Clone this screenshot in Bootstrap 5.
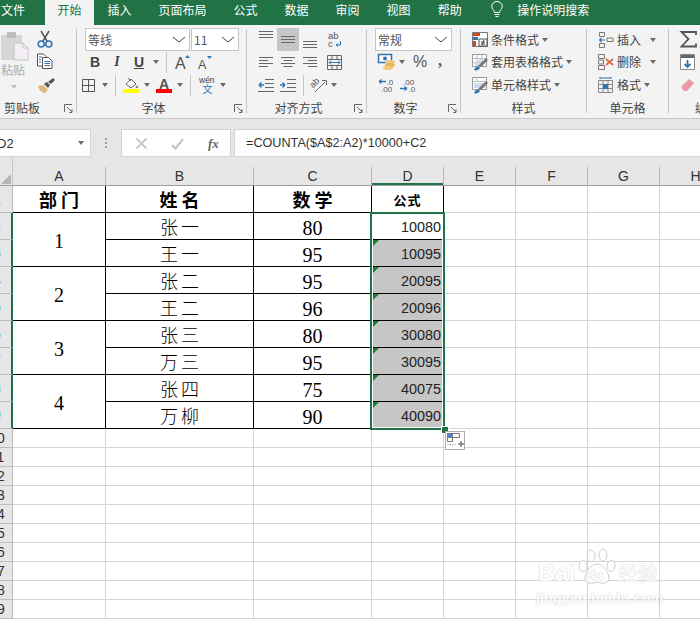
<!DOCTYPE html>
<html lang="zh-CN">
<head>
<meta charset="utf-8">
<title>Excel</title>
<link href="https://cdn.jsdelivr.net/npm/bootstrap@5.3.0/dist/css/bootstrap.min.css" rel="stylesheet">
<style>
html,body{margin:0;width:700px;height:622px;overflow:hidden;background:#fff}
body{font-family:"Liberation Sans","Noto Sans CJK SC",sans-serif;font-size:12px;color:#444;line-height:1}
svg{display:block;flex:none;overflow:visible}
svg text{font-family:"Liberation Sans","Noto Sans CJK SC",sans-serif}
.xl-app{width:700px;height:622px;overflow:hidden;position:relative}
.xl-tabs{height:25px;background:#217346;color:#fff;font-family:"Noto Sans CJK SC",sans-serif}
.xl-tab{padding:0 13.5px;height:25px;line-height:19px;flex:none}
.xl-tab.first{padding:0 20px 0 1px}
.xl-tab.on{padding:0 12.5px;background:#f3f3f3;color:#217346}
.xl-tab.tell{padding:0 0 0 14px}
.xl-bulb{margin-left:16px;margin-top:1px}
.xl-rbn{height:94px;background:#f3f3f3;border-bottom:1px solid #c8c8c8;font-family:"Noto Sans CJK SC",sans-serif;overflow:hidden}
.rsep{flex:none;width:1px;height:84px;margin-top:4px;background:#c6c6c6}
.rg{flex:none;position:relative;height:93px;padding-top:3px}
.rg-clip{width:76px}.rg-font{width:169px}.rg-align{width:119px}.rg-num{width:93px}.rg-style{width:125px}.rg-cell{width:81px}.rg-edit{width:31px}
.rrow{display:flex;align-items:center;height:23px}
.rrow:nth-child(2){height:22px}
.rrow.tall{height:24px}
.rlab{position:absolute;left:0;right:0;top:74px;height:17px;line-height:17px;text-align:center;color:#444;white-space:nowrap}
.rlab.lnch{padding-right:16px}
.rlab.s4{text-align:left;padding-left:4px}
.rlab.s26{text-align:left;padding-left:26px}
.lnch-ic{position:absolute;right:3px;top:79px}
.sel-box{height:23px;background:#fff;border:1px solid #c6c6c6;display:flex;align-items:center;justify-content:space-between;padding:0 3px 0 2px;color:#555;font-size:12px}
.w105{width:105px}.w48{width:48px}.w77{width:77px}
.crt{flex:none;width:0;height:0;border-left:3.5px solid transparent;border-right:3.5px solid transparent;border-top:4px solid #6a6a6a}
.vs{flex:none;width:1px;height:21px;background:#c6c6c6}
.bt{flex:none;width:22px;text-align:center;font-family:"Liberation Sans",sans-serif;font-size:14px;color:#444}
.bt.ser{font-family:"Liberation Serif",serif}
.bt u{text-underline-offset:1px}
.act{flex:none;width:22px;height:23px;background:#c6c6c6;display:flex;align-items:center;justify-content:center}
.pct{flex:none;width:13px;font-family:"Liberation Sans",sans-serif;font-size:16px;color:#555;text-align:center}
.cma{flex:none;font-family:"Liberation Serif",serif;font-weight:700;font-size:16px;color:#555;width:6px;margin-top:-3px}
.pst-txt{color:#a8a8a8;font-size:12px;text-align:center;width:26px;margin-top:4px}
.pst-col{width:36px;flex:none;padding-top:2px}
.pst-crt{margin:9px 0 0 11px;border-top-color:#bdbdbd}
.stk{display:flex;flex-direction:column;flex:none;padding-top:3px}
.t5{margin-top:5px}.t9{margin-top:9px}
.l1{margin-left:1px}.l3{margin-left:3px}.l4{margin-left:4px}.l5{margin-left:5px}.l6{margin-left:6px}.l7{margin-left:7px}.l8{margin-left:8px}.l9{margin-left:9px}.l10{margin-left:10px}.l11{margin-left:11px}.l12{margin-left:12px}.l13{margin-left:13px}.l23{margin-left:23px}
.xl-fbar{height:38px;background:#e6e6e6;padding-top:10px;margin:0}
.fb-name{flex:none;width:91px;height:28px;background:#fff;border:1px solid #d4d4d4;border-left:0;display:flex;align-items:center;justify-content:space-between;padding:0 6px 0 0;font-size:13px;color:#333;overflow:hidden}
.fb-name span{margin-left:-3px}
.fb-dots{flex:none;width:30px;display:flex;flex-direction:column;align-items:center;justify-content:center;gap:2px}
.fb-dots i{display:block;width:2px;height:2px;background:#a0a0a0}
.fb-fx{flex:none;width:110px;height:28px;background:#fff;border:1px solid #d4d4d4;display:flex;align-items:center}
.fx-t{font-family:"Liberation Serif",serif;font-style:italic;font-weight:700;font-size:13px;color:#666;margin-left:24px}
.fb-in{flex:1 1 auto;margin-left:3px;height:28px;background:#fff;border:1px solid #d4d4d4;border-right:0;display:flex;align-items:center;padding-left:11px;font-size:12.65px;color:#333;white-space:nowrap}
.xl-sheet{display:grid;grid-template-columns:13px 93px 148px 118px 72px 72px 72px 72px 72px;grid-template-rows:29px repeat(9,27px) repeat(10,19px);width:732px;background:#fff}
.xl-corner,.xl-ch{background:#e6e6e6;border-bottom:1px solid #9f9f9f}
.xl-corner{border-right:1px solid #c6c6c6;position:relative;overflow:hidden}
.xl-corner::after{content:"";position:absolute;right:1px;bottom:1px;border-style:solid;border-width:0 0 10px 10px;border-color:transparent transparent #b5b5b5 transparent}
.xl-ch{position:relative;display:flex;align-items:flex-end;justify-content:center;font-size:14px;color:#333;padding-bottom:1px;line-height:16px;border-right:1px solid #b9b9b9}
.xl-ch::before{content:"";position:absolute;left:0;right:-1px;top:0;height:10px;background:#e6e6e6}
.xl-ch.on{box-shadow:inset 0 -2px 0 #217346}
.xl-rh{background:#e6e6e6;border-bottom:1px solid #bdbdbd;border-right:1px solid #b9b9b9;overflow:hidden;display:flex;align-items:center;font-size:14px;color:#333}
.xl-rh span{flex:none;width:18px;margin-left:-12px;text-align:center}
.xl-rh.on{border-right:2px solid #217346;color:#217346}
.xl-c{border-right:1px solid #d4d4d4;border-bottom:1px solid #d4d4d4}
.xl-t{border-right:1px solid #000;border-bottom:1px solid #000;display:flex;align-items:center;justify-content:center;color:#000;position:relative;font-family:"Liberation Serif","Noto Sans CJK SC",serif}
.xl-h{font-family:"Noto Sans CJK SC",sans-serif;font-weight:700;font-size:18px;letter-spacing:4px;padding-left:4px}
.xl-h.sm{font-size:13px;letter-spacing:1px;padding-left:0}
.xl-n{font-family:"Noto Sans CJK SC",sans-serif;font-weight:300;font-size:18px;letter-spacing:3px;padding-left:3px}
.xl-d{font-size:20px;padding-top:4px}
.xl-m{grid-row:span 2;padding-top:2px}
.xl-v{font-family:"Liberation Sans",sans-serif;font-size:14.4px;justify-content:flex-end;padding-right:2px;padding-top:3px;color:#222;line-height:1}
.xl-v.gy{background:#c6c6c6}
.xl-v.gy::before{content:"";position:absolute;left:1px;top:0;border-style:solid;border-width:6px 6px 0 0;border-color:#1f7a37 transparent transparent transparent}
.xl-sel{position:absolute;left:370px;top:212px;width:75px;height:218px;border:2px solid #217346;box-shadow:inset 0 0 0 1px #fff;pointer-events:none}
.xl-hnd{position:absolute;left:441px;top:426px;width:6px;height:6px;background:#217346;border:1px solid #fff;box-sizing:content-box}
.xl-paste{position:absolute;left:445px;top:431px;width:20px;height:19px;background:#fff;border:1px solid #adadad;display:flex;align-items:center;justify-content:center}
.wm{position:absolute;left:534px;top:546px;width:130px;height:62px;color:#fff;font-family:"Liberation Sans","Noto Sans CJK SC",sans-serif;text-shadow:0 0 1px #c4c4c4,0 0 1px #c4c4c4;opacity:.8}
.wm-t{position:absolute;left:4px;top:15px;font-size:24px;font-weight:700;white-space:nowrap}
.wm-du{position:absolute;left:53px;top:22px;font-size:13px;font-weight:700;white-space:nowrap}
.wm-j{position:absolute;left:84px;top:17px;font-size:20px;font-family:"Noto Sans CJK SC",sans-serif;white-space:nowrap}
.wm-u{position:absolute;left:2px;top:45px;font-size:14.5px;white-space:nowrap;font-weight:700}
.wm-p{position:absolute;left:44px;top:0}
</style>
</head>
<body>
<div class="xl-app">
  <div class="xl-tabs d-flex">
    <div class="xl-tab first">文件</div>
    <div class="xl-tab on">开始</div>
    <div class="xl-tab">插入</div>
    <div class="xl-tab">页面布局</div>
    <div class="xl-tab">公式</div>
    <div class="xl-tab">数据</div>
    <div class="xl-tab">审阅</div>
    <div class="xl-tab">视图</div>
    <div class="xl-tab">帮助</div>
    <svg class="xl-bulb" width="12" height="17" viewBox="0 0 12 17" fill="none" stroke="#fff" stroke-width="1"><path d="M3.5 11.5C3.5 9 .7 8 .7 5.5a5.3 5 0 0 1 10.6 0c0 2.5-2.8 3.5-2.8 6zM3.5 13.5h5M4.5 15.5h3"/></svg>
    <div class="xl-tab tell">操作说明搜索</div>
  </div>

  <div class="xl-rbn d-flex">
    <!-- clipboard -->
    <div class="rg rg-clip d-flex">
      <div class="pst-col">
        <svg class="l1" width="28" height="30" viewBox="0 0 28 30"><rect x="0" y="5" width="21" height="25" rx="1" fill="#d6d6d6"/><rect x="6" y="2" width="9" height="6" rx="1" fill="#bdbdbd"/><path d="M13 13h9l5 5v12H13z" fill="#f3eef3" stroke="#c4c4c4"/><path d="M22 13v5h5" fill="none" stroke="#c4c4c4"/></svg>
        <div class="pst-txt">粘贴</div>
        <div class="crt pst-crt"></div>
      </div>
      <div class="stk">
        <svg class="l1" width="16" height="17" viewBox="0 0 16 17" fill="none"><path d="M4 0l6 10M12 0L6 10" stroke="#555" stroke-width="1.5"/><circle cx="4.2" cy="13" r="3" stroke="#2f75b5" stroke-width="1.6"/><circle cx="11.8" cy="13" r="3" stroke="#2f75b5" stroke-width="1.6"/></svg>
        <svg class="l1 t5" width="16" height="16" viewBox="0 0 16 16" fill="#fff" stroke="#555"><path d="M.5 1h6l3 3v9h-9z"/><path d="M5.5 4.500h6l3.500 3.500v7.500h-9.500z"/><path d="M2 4h3M2 6.500h2M2 9h2" stroke="#2f75b5"/><path d="M7.500 8.500h5.500M7.500 10.500h5.500M7.500 12.500h5.500" stroke="#2f75b5"/></svg>
        <svg class="l1 t9" width="18" height="15" viewBox="0 0 18 15"><path d="M1 8l5-1 5 5-3 3c-3 0-6-3-7-7z" fill="#e2b77b"/><path d="M7 6l3-2 3 3-2 3zM11 4l5-4 2 2-4 4z" fill="#555"/></svg>
      </div>
      <div class="rlab s4">剪贴板</div>
      <svg class="lnch-ic" width="9" height="9" viewBox="0 0 9 9" fill="none" stroke="#666"><path d="M.5 8V.5H8"/><path d="M3 3l5 5M8 5v3.500H5"/></svg>
    </div>
    <div class="rsep"></div>

    <!-- font -->
    <div class="rg rg-font">
      <div class="rrow ps-2">
        <div class="sel-box w105"><span>等线</span><svg width="14" height="7" viewBox="0 0 14 7" fill="none" stroke="#444"><path d="M1 1l6 5 6-5"/></svg></div>
        <div class="sel-box w48 l1"><span>11</span><svg width="14" height="7" viewBox="0 0 14 7" fill="none" stroke="#444"><path d="M1 1l6 5 6-5"/></svg></div>
      </div>
      <div class="rrow">
        <div class="bt l7 fw-bold">B</div>
        <div class="bt ser fst-italic fw-bold">I</div>
        <div class="bt fw-bold"><u>U</u></div>
        <div class="crt l3"></div>
        <div class="vs l7"></div>
        <svg class="l8" width="16" height="16" viewBox="0 0 16 16"><text x="0" y="15" font-size="16" fill="#555">A</text><path d="M10 4l2.500-3L15 4z" fill="#2f75b5"/></svg>
        <svg class="l7" width="16" height="15" viewBox="0 0 16 15"><text x="0" y="14" font-size="12.500" fill="#555">A</text><path d="M9 1l2.500 3L14 1z" fill="#2f75b5"/></svg>
      </div>
      <div class="rrow tall">
        <svg class="l5" width="13" height="13" viewBox="0 0 13 13" fill="none" stroke="#555"><path d="M.5.5h12v12H.5zM6.500.5v12M.5 6.500h12"/></svg>
        <div class="crt l7"></div>
        <div class="vs l7"></div>
        <svg class="l7" width="16" height="16" viewBox="0 0 16 16"><path d="M3 7l5-5 5 5-5 4z" fill="#fff" stroke="#666"/><path d="M5 1l3 3" stroke="#666"/><path d="M14 8l1.500 3h-3z" fill="#777"/><rect y="12" width="16" height="4" fill="#ffff00"/></svg>
        <div class="crt l5"></div>
        <svg class="l6" width="16" height="16" viewBox="0 0 16 16"><text x="3" y="11.500" font-size="14" font-weight="700" fill="#555">A</text><rect y="12" width="16" height="4" fill="#ff0000"/></svg>
        <div class="crt l5"></div>
        <div class="vs l7"></div>
        <svg class="l8" width="17" height="18" viewBox="0 0 17 18"><text x="0" y="7" font-size="8.500" fill="#444">wén</text><text x="3.500" y="17" font-size="10" fill="#2f75b5">文</text></svg>
        <div class="crt l4"></div>
      </div>
      <div class="rlab lnch">字体</div>
      <svg class="lnch-ic" width="9" height="9" viewBox="0 0 9 9" fill="none" stroke="#666"><path d="M.5 8V.5H8"/><path d="M3 3l5 5M8 5v3.500H5"/></svg>
    </div>
    <div class="rsep"></div>

    <!-- alignment -->
    <div class="rg rg-align">
      <div class="rrow">
        <svg class="l12" width="14" height="23" viewBox="0 0 14 23" stroke="#666"><path d="M0 3.500h14M0 6.500h14M0 9.500h14" /></svg>
        <div class="act l4"><svg width="14" height="9" viewBox="0 0 14 9" stroke="#666"><path d="M0 1.500h14M0 4.500h14M0 7.500h14"/></svg></div>
        <svg class="l4" width="14" height="23" viewBox="0 0 14 23" stroke="#666"><path d="M0 13.500h14M0 16.500h14M0 19.500h14"/></svg>
        <svg class="l11" width="14" height="17" viewBox="0 0 14 17"><text x="0" y="7.500" font-size="9.500" fill="#555">ab</text><text x="0" y="16" font-size="9.500" fill="#555">c</text><path d="M12.500 10v4H8M8 14l2-1.500M8 14l2 1.500" fill="none" stroke="#2f75b5"/></svg>
      </div>
      <div class="rrow">
        <svg class="l12" width="14" height="10" viewBox="0 0 14 10" stroke="#666"><path d="M0 .5h14M0 3.500h9M0 6.500h14M0 9.500h9"/></svg>
        <svg class="l8" width="14" height="10" viewBox="0 0 14 10" stroke="#666"><path d="M0 .5h14M2.500 3.500h9M0 6.500h14M2.500 9.500h9"/></svg>
        <svg class="l8" width="14" height="10" viewBox="0 0 14 10" stroke="#666"><path d="M0 .5h14M5 3.500h9M0 6.500h14M5 9.500h9"/></svg>
        <svg class="l10" width="15" height="15" viewBox="0 0 15 15" fill="none"><path d="M.5.500h14v14H.5zM.5 4.500h14M.5 10.500h14M5 .5v4M10 .5v4M5 10.500v4M10 10.500v4" stroke="#666"/><path d="M2 7.500h11M2 7.500l2-2M2 7.500l2 2M13 7.500l-2-2M13 7.500l-2 2" stroke="#2f75b5"/></svg>
      </div>
      <div class="rrow tall">
        <svg class="l11" width="16" height="13" viewBox="0 0 16 13" fill="none"><path d="M7 .5h9M7 4.500h9M7 8.500h9M0 12.500h16" stroke="#666"/><path d="M6 6H1M1 6l2.500-2.500M1 6l2.500 2.500" stroke="#2f75b5" stroke-width="1.400"/></svg>
        <svg class="l6" width="16" height="13" viewBox="0 0 16 13" fill="none"><path d="M7 .5h9M7 4.500h9M7 8.500h9M0 12.500h16" stroke="#666"/><path d="M0 6h5M5 6L2.500 3.500M5 6L2.500 8.500" stroke="#2f75b5" stroke-width="1.400"/></svg>
        <div class="vs l7"></div>
        <svg class="l7" width="17" height="16" viewBox="0 0 17 16"><text x="0" y="9" font-size="9" fill="#555" transform="rotate(-45 4 8)">ab</text><path d="M4 15L14 5M11 3.500h4.500V8" fill="none" stroke="#666"/></svg>
        <div class="crt l3"></div>
      </div>
      <div class="rlab lnch">对齐方式</div>
      <svg class="lnch-ic" width="9" height="9" viewBox="0 0 9 9" fill="none" stroke="#666"><path d="M.5 8V.5H8"/><path d="M3 3l5 5M8 5v3.500H5"/></svg>
    </div>
    <div class="rsep"></div>

    <!-- number -->
    <div class="rg rg-num">
      <div class="rrow ps-2">
        <div class="sel-box w77"><span>常规</span><svg width="14" height="7" viewBox="0 0 14 7" fill="none" stroke="#444"><path d="M1 1l6 5 6-5"/></svg></div>
      </div>
      <div class="rrow">
        <svg class="l11" width="18" height="16" viewBox="0 0 18 16"><rect x=".5" y=".5" width="13" height="8" fill="#fff" stroke="#2f75b5" stroke-width="1.500"/><circle cx="7" cy="4.500" r="2" fill="#2f75b5"/><ellipse cx="12" cy="8" rx="5" ry="2" fill="#f4c77f"/><ellipse cx="12" cy="11" rx="5" ry="2" fill="#eab35f"/><ellipse cx="10" cy="14" rx="5" ry="2" fill="#f4c77f"/></svg>
        <div class="crt l3"></div>
        <div class="pct l8">%</div>
        <div class="cma l12">,</div>
      </div>
      <div class="rrow tall">
        <svg class="l11" width="15" height="14" viewBox="0 0 15 14"><path d="M8 3.500H1M1 3.500l2.500-2M1 3.500l2.500 2" fill="none" stroke="#2f75b5" stroke-width="1.300"/><text x="8.500" y="6.500" font-size="8" fill="#555">.0</text><text x="3" y="14" font-size="8" fill="#555">.00</text></svg>
        <svg class="l7" width="15" height="14" viewBox="0 0 15 14"><text x="3" y="6.500" font-size="8" fill="#555">.00</text><path d="M0 10.500h7M7 10.500l-2.500-2M7 10.500l-2.500 2" fill="none" stroke="#2f75b5" stroke-width="1.300"/><text x="8.500" y="14" font-size="8" fill="#555">.0</text></svg>
      </div>
      <div class="rlab lnch">数字</div>
      <svg class="lnch-ic" width="9" height="9" viewBox="0 0 9 9" fill="none" stroke="#666"><path d="M.5 8V.5H8"/><path d="M3 3l5 5M8 5v3.500H5"/></svg>
    </div>
    <div class="rsep"></div>

    <!-- styles -->
    <div class="rg rg-style">
      <div class="rrow">
        <svg class="l11" width="16" height="15" viewBox="0 0 16 15"><path d="M.5.500h15v14H.5z" fill="#fff" stroke="#777"/><path d="M1 1h7v3H1z" fill="#d24726"/><path d="M1 5h5v3H1z" fill="#2f75b5"/><path d="M1 9h3v5H1z" fill="#d24726"/><rect x="7" y="7" width="8" height="7" fill="#fff" stroke="#555"/><path d="M9 10h4M9 12h4M10 13l2-5" stroke="#444" fill="none"/></svg>
        <span class="l3">条件格式</span><div class="crt l3"></div>
      </div>
      <div class="rrow">
        <svg class="l11" width="16" height="16" viewBox="0 0 16 16"><path d="M.5.500h14v12H.5z" fill="#fff" stroke="#999"/><path d="M.5 4.500h14M.5 8.500h14M5 .5v12M10 .5v12" stroke="#bbb"/><path d="M2 9l9-5v6l-7 2z" fill="#cdd9ea"/><path d="M6 12l8-8 2 2-7 7z" fill="#777"/><path d="M2 16c1-3 3-4 5-3l1 1c-1 2-4 3-6 2z" fill="#2f75b5"/></svg>
        <span class="l3">套用表格格式</span><div class="crt l3"></div>
      </div>
      <div class="rrow tall">
        <svg class="l11" width="16" height="16" viewBox="0 0 16 16"><path d="M.5.500h14v12H.5z" fill="#fff" stroke="#999"/><path d="M.5 4.500h14M5 .5v4" stroke="#bbb"/><path d="M2 6h11v5H2z" fill="#cdd9ea"/><path d="M6 12l8-8 2 2-7 7z" fill="#777"/><path d="M2 16c1-3 3-4 5-3l1 1c-1 2-4 3-6 2z" fill="#2f75b5"/></svg>
        <span class="l3">单元格样式</span><div class="crt l3"></div>
      </div>
      <div class="rlab">样式</div>
    </div>
    <div class="rsep"></div>

    <!-- cells -->
    <div class="rg rg-cell">
      <div class="rrow">
        <svg class="l11" width="16" height="16" viewBox="0 0 16 16" fill="none" stroke="#777"><path d="M1.500.5h5v4h-5zM1.500 11.500h5v4h-5zM9 6h6v3.500H9z"/><path d="M7 8H1.500M1.500 8l2-2M1.500 8l2 2" stroke="#2f75b5" stroke-width="1.200"/></svg>
        <span class="l3">插入</span><div class="crt l9"></div>
      </div>
      <div class="rrow">
        <svg class="l11" width="16" height="16" viewBox="0 0 16 16" fill="none"><path d="M.5.500h6v4h-6zM.5 11.500h6v4h-6zM.5 6h5v4h-5z" stroke="#777"/><path d="M8 5l7 6M15 5l-7 6" stroke="#d9694a" stroke-width="1.800"/></svg>
        <span class="l3">删除</span><div class="crt l9"></div>
      </div>
      <div class="rrow tall">
        <svg class="l11" width="16" height="16" viewBox="0 0 16 16" fill="none"><path d="M.5 3.500h14v12H.5zM.5 7.500h14M.5 11.500h14M5 3.500v12M10 3.500v12" stroke="#888"/><rect x="5" y="7" width="5" height="5" fill="#2f75b5"/><path d="M2 1h11M2 0v2M13 0v2" stroke="#2f75b5"/></svg>
        <span class="l3">格式</span><div class="crt l3"></div>
      </div>
      <div class="rlab">单元格</div>
    </div>
    <div class="rsep"></div>

    <!-- editing -->
    <div class="rg rg-edit">
      <div class="rrow">
        <svg class="l11" width="17" height="17" viewBox="0 0 17 17" fill="none"><path d="M16 4V1H1.500l7 7-7 7.500H16v-3" stroke="#555" stroke-width="1.800"/></svg>
      </div>
      <div class="rrow">
        <svg class="l11" width="15" height="16" viewBox="0 0 15 16"><path d="M.5.500h14v15H.5z" fill="#fff" stroke="#888"/><rect x="1" y="1" width="13" height="3" fill="#666"/><path d="M7.500 6v7M4.500 10l3 3 3-3" fill="none" stroke="#2f75b5" stroke-width="1.800"/></svg>
      </div>
      <div class="rrow tall">
        <svg class="l11" width="15" height="14" viewBox="0 0 15 14"><path d="M1 9l8-8 5 4-7 8H4z" fill="#ea9aa6"/></svg>
      </div>
      <div class="rlab s26">编辑</div>
    </div>
  </div>

  <div class="xl-fbar d-flex">
    <div class="fb-name"><span>D2</span><div class="crt"></div></div>
    <div class="fb-dots"><i></i><i></i><i></i></div>
    <div class="fb-fx">
      <svg class="l13" width="13" height="13" viewBox="0 0 13 13" fill="none" stroke="#c6c6c6" stroke-width="1.800"><path d="M1.500 1.500l10 10M11.500 1.500l-10 10"/></svg>
      <svg class="l23" width="13" height="13" viewBox="0 0 13 13" fill="none" stroke="#c6c6c6" stroke-width="2.200"><path d="M1 8l3.500 3.500L12 2"/></svg>
      <span class="fx-t">fx</span>
    </div>
    <div class="fb-in">=COUNTA($A$2:A2)*10000+C2</div>
  </div>

  <div class="xl-sheet">
    <div class="xl-corner"></div>
    <div class="xl-ch">A</div><div class="xl-ch">B</div><div class="xl-ch">C</div><div class="xl-ch on">D</div><div class="xl-ch">E</div><div class="xl-ch">F</div><div class="xl-ch">G</div><div class="xl-ch">H</div>

    <div class="xl-rh"><span>1</span></div>
    <div class="xl-t xl-h">部门</div><div class="xl-t xl-h">姓名</div><div class="xl-t xl-h">数学</div><div class="xl-t xl-h sm">公式</div>
    <div class="xl-c"></div><div class="xl-c"></div><div class="xl-c"></div><div class="xl-c"></div>

    <div class="xl-rh on"><span>2</span></div>
    <div class="xl-t xl-d xl-m">1</div><div class="xl-t xl-n">张一</div><div class="xl-t xl-d">80</div><div class="xl-t xl-v">10080</div>
    <div class="xl-c"></div><div class="xl-c"></div><div class="xl-c"></div><div class="xl-c"></div>

    <div class="xl-rh on"><span>3</span></div>
    <div class="xl-t xl-n">王一</div><div class="xl-t xl-d">95</div><div class="xl-t xl-v gy">10095</div>
    <div class="xl-c"></div><div class="xl-c"></div><div class="xl-c"></div><div class="xl-c"></div>

    <div class="xl-rh on"><span>4</span></div>
    <div class="xl-t xl-d xl-m">2</div><div class="xl-t xl-n">张二</div><div class="xl-t xl-d">95</div><div class="xl-t xl-v gy">20095</div>
    <div class="xl-c"></div><div class="xl-c"></div><div class="xl-c"></div><div class="xl-c"></div>

    <div class="xl-rh on"><span>5</span></div>
    <div class="xl-t xl-n">王二</div><div class="xl-t xl-d">96</div><div class="xl-t xl-v gy">20096</div>
    <div class="xl-c"></div><div class="xl-c"></div><div class="xl-c"></div><div class="xl-c"></div>

    <div class="xl-rh on"><span>6</span></div>
    <div class="xl-t xl-d xl-m">3</div><div class="xl-t xl-n">张三</div><div class="xl-t xl-d">80</div><div class="xl-t xl-v gy">30080</div>
    <div class="xl-c"></div><div class="xl-c"></div><div class="xl-c"></div><div class="xl-c"></div>

    <div class="xl-rh on"><span>7</span></div>
    <div class="xl-t xl-n">万三</div><div class="xl-t xl-d">95</div><div class="xl-t xl-v gy">30095</div>
    <div class="xl-c"></div><div class="xl-c"></div><div class="xl-c"></div><div class="xl-c"></div>

    <div class="xl-rh on"><span>8</span></div>
    <div class="xl-t xl-d xl-m">4</div><div class="xl-t xl-n">张四</div><div class="xl-t xl-d">75</div><div class="xl-t xl-v gy">40075</div>
    <div class="xl-c"></div><div class="xl-c"></div><div class="xl-c"></div><div class="xl-c"></div>

    <div class="xl-rh on"><span>9</span></div>
    <div class="xl-t xl-n">万柳</div><div class="xl-t xl-d">90</div><div class="xl-t xl-v gy">40090</div>
    <div class="xl-c"></div><div class="xl-c"></div><div class="xl-c"></div><div class="xl-c"></div>

    <div class="xl-rh"><span>10</span></div><div class="xl-c"></div><div class="xl-c"></div><div class="xl-c"></div><div class="xl-c"></div><div class="xl-c"></div><div class="xl-c"></div><div class="xl-c"></div><div class="xl-c"></div>
    <div class="xl-rh"><span>11</span></div><div class="xl-c"></div><div class="xl-c"></div><div class="xl-c"></div><div class="xl-c"></div><div class="xl-c"></div><div class="xl-c"></div><div class="xl-c"></div><div class="xl-c"></div>
    <div class="xl-rh"><span>12</span></div><div class="xl-c"></div><div class="xl-c"></div><div class="xl-c"></div><div class="xl-c"></div><div class="xl-c"></div><div class="xl-c"></div><div class="xl-c"></div><div class="xl-c"></div>
    <div class="xl-rh"><span>13</span></div><div class="xl-c"></div><div class="xl-c"></div><div class="xl-c"></div><div class="xl-c"></div><div class="xl-c"></div><div class="xl-c"></div><div class="xl-c"></div><div class="xl-c"></div>
    <div class="xl-rh"><span>14</span></div><div class="xl-c"></div><div class="xl-c"></div><div class="xl-c"></div><div class="xl-c"></div><div class="xl-c"></div><div class="xl-c"></div><div class="xl-c"></div><div class="xl-c"></div>
    <div class="xl-rh"><span>15</span></div><div class="xl-c"></div><div class="xl-c"></div><div class="xl-c"></div><div class="xl-c"></div><div class="xl-c"></div><div class="xl-c"></div><div class="xl-c"></div><div class="xl-c"></div>
    <div class="xl-rh"><span>16</span></div><div class="xl-c"></div><div class="xl-c"></div><div class="xl-c"></div><div class="xl-c"></div><div class="xl-c"></div><div class="xl-c"></div><div class="xl-c"></div><div class="xl-c"></div>
    <div class="xl-rh"><span>17</span></div><div class="xl-c"></div><div class="xl-c"></div><div class="xl-c"></div><div class="xl-c"></div><div class="xl-c"></div><div class="xl-c"></div><div class="xl-c"></div><div class="xl-c"></div>
    <div class="xl-rh"><span>18</span></div><div class="xl-c"></div><div class="xl-c"></div><div class="xl-c"></div><div class="xl-c"></div><div class="xl-c"></div><div class="xl-c"></div><div class="xl-c"></div><div class="xl-c"></div>
    <div class="xl-rh"><span>19</span></div><div class="xl-c"></div><div class="xl-c"></div><div class="xl-c"></div><div class="xl-c"></div><div class="xl-c"></div><div class="xl-c"></div><div class="xl-c"></div><div class="xl-c"></div>
  </div>

  <div class="xl-sel"></div>
  <div class="xl-hnd"></div>
  <div class="xl-paste">
    <svg width="17" height="15" viewBox="0 0 17 15" fill="none"><rect x=".5" y=".5" width="5" height="4" fill="#4a86e8" stroke="#777"/><path d="M5.500.5h7v4h-7zM.5 4.500h5v4h-5z" stroke="#777"/><path d="M.5 11.500h8" stroke="#777" stroke-dasharray="1 1.500"/><path d="M11 11h6M14 8v6" stroke="#777" stroke-width="1.400"/></svg>
  </div>

  <div class="wm">
    <svg class="wm-p" width="40" height="40" viewBox="0 0 40 40" fill="#fff" stroke="#c4c4c4"><ellipse cx="13" cy="10" rx="4" ry="6"/><ellipse cx="25" cy="9" rx="4" ry="6"/><ellipse cx="5" cy="20" rx="4" ry="5.500"/><ellipse cx="33" cy="20" rx="4" ry="5.500"/><path d="M19 18c6 0 12 9 12 14 0 6-7 6-12 4-5 2-12 2-12-4 0-5 6-14 12-14z"/></svg>
    <div class="wm-t">Bai</div>
    <div class="wm-du">du</div>
    <div class="wm-j">经验</div>
    <div class="wm-u">jingyan.baidu.com</div>
  </div>
</div>
<script src="https://cdn.jsdelivr.net/npm/bootstrap@5.3.0/dist/js/bootstrap.bundle.min.js"></script>
</body>
</html>
